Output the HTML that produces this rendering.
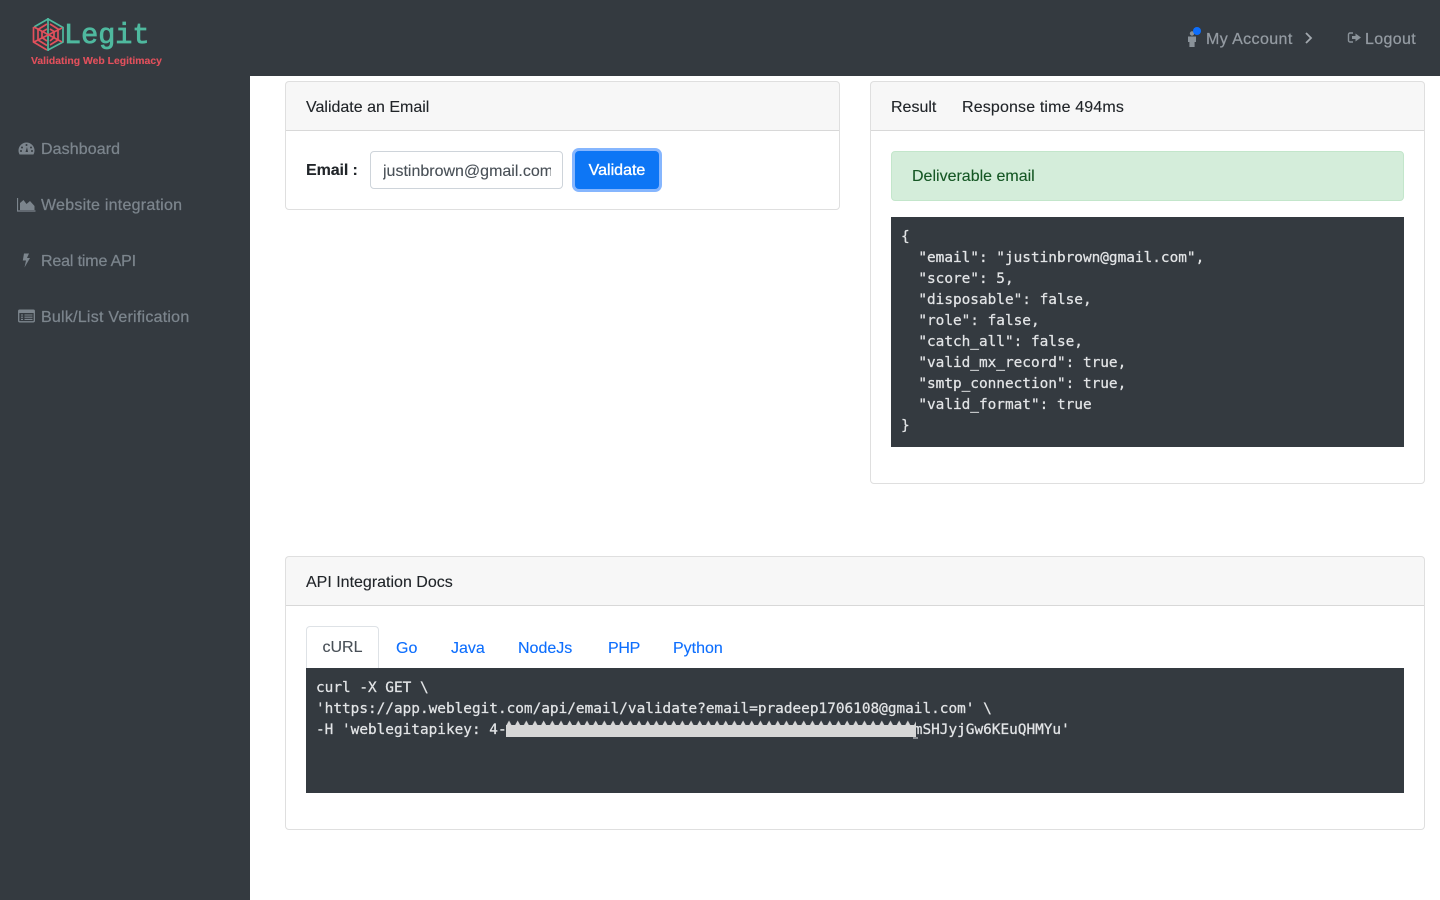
<!DOCTYPE html>
<html><head><meta charset="utf-8"><style>
*{box-sizing:border-box}
html,body{margin:0;padding:0;width:1440px;height:900px;overflow:hidden;background:#fff;font-family:"Liberation Sans",sans-serif;font-size:16px;color:#212529;-webkit-text-stroke:.12px}
.a{position:absolute;white-space:nowrap}
.side{left:0;top:0;width:250px;height:900px;background:#343a40}
.top{left:0;top:0;width:1440px;height:76px;background:#343a40}
.nav{color:#7c858d;line-height:24px;letter-spacing:.24px;-webkit-text-stroke:.25px}
.card{background:#fff;border:1px solid rgba(0,0,0,.125);border-radius:4px}
.hd{left:0;top:0;right:0;height:49px;position:absolute;background:rgba(0,0,0,.03);border-bottom:1px solid rgba(0,0,0,.125);border-radius:3px 3px 0 0}
pre.a{margin:0;font-family:"DejaVu Sans Mono","Liberation Mono",monospace;font-size:14.4px;line-height:21px;color:#e2e4e6;background:#343a40;white-space:pre;overflow:hidden;-webkit-text-stroke:.25px}
.tab{color:#0d6efd;line-height:24px}
</style></head><body>
<div class="a side"></div><div class="a top"></div>

<svg class="a" style="left:31px;top:17px" width="36" height="36" viewBox="0 0 36 36" fill="none" stroke-width="1.700">
<g stroke="#4fb99f"><path d="M3 10 17 2l15 8.500V25L17 33"/><path d="M17 1V34"/></g>
<g stroke="#e2505c"><path d="M2.500 10v15L16 33"/><path d="M16 7 7 12.500V23l9 5.500"/><path d="M16 12l-5 3v5.500l5 3.500"/><path d="M19 7l8 5v11l-8 5"/><path d="M19 12l4 2.500v6L19 24"/><path d="M3 10l28 15M3 25l28-14"/></g>
</svg>
<div class="a" style="left:64px;top:19px;font-family:'Liberation Mono',monospace;font-size:28.500px;line-height:34px;color:#4fb99f;-webkit-text-stroke:.8px #4fb99f">Legit</div>
<div class="a" style="left:31px;top:55px;font-size:10.400px;line-height:13px;font-weight:bold;color:#e2505c">Validating Web Legitimacy</div>

<svg class="a" style="left:1186px;top:26px" width="18" height="22" viewBox="0 0 18 22"><circle cx="6" cy="7.500" r="2.200" fill="#8a9299"/><path d="M2 10.500h8v5.500H8.600v5H3.400v-5H2z" fill="#8a9299"/><circle cx="11" cy="5" r="4" fill="#0d6efd"/></svg>
<div class="a nav" style="left:1206px;top:28px;color:#949ba2;letter-spacing:.4px">My Account</div>
<svg class="a" style="left:1303px;top:31px" width="12" height="14" viewBox="0 0 12 14" fill="none" stroke="#a3a9af" stroke-width="1.800"><path d="M3 2l5 5-5 5"/></svg>
<svg class="a" style="left:1347px;top:31px" width="16" height="14" viewBox="0 0 16 14"><path d="M6 2H3a1.500 1.500 0 0 0-1.500 1.500v6A1.500 1.500 0 0 0 3 11h3" fill="none" stroke="#8a9299" stroke-width="1.400"/><path d="M8.500 2.500 14 6.500l-5.500 4V8H5V5h3.500z" fill="#8a9299"/></svg>
<div class="a nav" style="left:1365px;top:28px;color:#949ba2;letter-spacing:.35px">Logout</div>

<svg class="a" style="left:18px;top:141px" width="17" height="15" viewBox="0 0 17 15"><path d="M8.500 1.500A8 8 0 0 0 .5 9.500c0 1.500.4 2.800 1.100 4h13.800c.7-1.200 1.100-2.500 1.100-4a8 8 0 0 0-8-8z" fill="#7c858d"/><circle cx="8.500" cy="4" r="1" fill="#343a40"/><circle cx="4" cy="6.500" r="1" fill="#343a40"/><circle cx="13" cy="6.500" r="1" fill="#343a40"/><circle cx="3" cy="10" r="1" fill="#343a40"/><circle cx="14" cy="10" r="1" fill="#343a40"/><path d="M7.500 11 9 6l1 5z" fill="#343a40"/></svg>
<div class="a nav" style="left:41px;top:138px;letter-spacing:.1px">Dashboard</div>
<svg class="a" style="left:17px;top:197px" width="19" height="15" viewBox="0 0 19 15"><path d="M.5 1v13H18.500" fill="none" stroke="#7c858d" stroke-width="1.200"/><path d="M3 13V6l3.500-3 3 4 3.500-3 4.500 5v4z" fill="#7c858d"/></svg>
<div class="a nav" style="left:41px;top:194px">Website integration</div>
<svg class="a" style="left:21px;top:253px" width="10" height="15" viewBox="0 0 10 15"><path d="M3 .5h5L6 5h3L3.500 14.500 5 7.500H1.800z" fill="#7c858d"/></svg>
<div class="a nav" style="left:41px;top:250px;letter-spacing:-.15px">Real time API</div>
<svg class="a" style="left:18px;top:309px" width="17" height="14" viewBox="0 0 17 14"><rect x=".7" y="1.200" width="15.600" height="11.600" rx="1" fill="none" stroke="#7c858d" stroke-width="1.300"/><rect x="1" y="1.500" width="15" height="2.500" fill="#7c858d"/><path d="M3 6h2M3 8.200h2M3 10.400h2M6.500 6h8M6.500 8.200h8M6.500 10.400h8" stroke="#7c858d" stroke-width="1.100"/></svg>
<div class="a nav" style="left:41px;top:306px">Bulk/List Verification</div>

<div class="a card" style="left:285px;top:81px;width:555px;height:129px">
<div class="hd"></div><div class="a" style="left:20px;top:14px;line-height:24px">Validate an Email</div></div>
<div class="a" style="left:306px;top:159px;line-height:24px;font-weight:bold;letter-spacing:-.1px">Email :</div>
<div class="a" style="left:370px;top:151px;width:193px;height:38px;border:1px solid #ced4da;border-radius:4px;background:#fff"><div style="position:absolute;left:12px;top:7px;width:168px;overflow:hidden;line-height:26px;color:#495057">justinbrown@gmail.com</div></div>
<div class="a" style="left:575px;top:151px;width:84px;height:38px;background:#0d76f5;border-radius:4px;box-shadow:0 0 0 3px rgba(13,110,253,.5);color:#fff;text-align:center;line-height:40px;-webkit-text-stroke:.35px">Validate</div>

<div class="a card" style="left:870px;top:81px;width:555px;height:403px">
<div class="hd"></div><div class="a" style="left:20px;top:14px;line-height:24px">Result</div><div class="a" style="left:91px;top:14px;line-height:24px;letter-spacing:.15px">Response time 494ms</div></div>
<div class="a" style="left:891px;top:151px;width:513px;height:50px;background:#d4edda;border:1px solid #c3e6cb;border-radius:4px;padding:13px 20px;line-height:24px;color:#155724">Deliverable email</div>
<pre class="a" style="left:891px;top:217px;width:513px;height:230px;padding:10px 10px">{
  "email": "justinbrown@gmail.com",
  "score": 5,
  "disposable": false,
  "role": false,
  "catch_all": false,
  "valid_mx_record": true,
  "smtp_connection": true,
  "valid_format": true
}</pre>

<div class="a card" style="left:285px;top:556px;width:1140px;height:274px">
<div class="hd"></div><div class="a" style="left:20px;top:14px;line-height:24px">API Integration Docs</div></div>
<div class="a" style="left:306px;top:626px;width:73px;height:42px;border:1px solid #dee2e6;border-bottom:0;border-radius:4px 4px 0 0;background:#fff;text-align:center;line-height:41px;color:#495057">cURL</div>
<div class="a tab" style="left:396px;top:637px">Go</div>
<div class="a tab" style="left:451px;top:637px">Java</div>
<div class="a tab" style="left:518px;top:637px">NodeJs</div>
<div class="a tab" style="left:608px;top:637px;letter-spacing:-.3px">PHP</div>
<div class="a tab" style="left:673px;top:637px">Python</div>
<pre class="a" style="left:306px;top:668px;width:1098px;height:125px;padding:10px 10px">curl -X GET \
'https://app.weblegit.com/api/email/validate?email=pradeep1706108@gmail.com' \
-H 'weblegitapikey: 4-                                               mSHJyjGw6KEuQHMYu'</pre>
<svg class="a" style="left:505px;top:720px" width="414" height="20" viewBox="0 0 414 20">
<defs><pattern id="sp" width="8.670" height="20" patternUnits="userSpaceOnUse"><path d="M1 6 4 0.500 7 6z" fill="#d6d6d6"/></pattern></defs>
<rect x="1" y="5" width="410" height="12" fill="#d6d6d6"/>
<rect x="1" y="0" width="410" height="7" fill="url(#sp)"/>
<path d="M408 18h5" stroke="#e2e4e6" stroke-width="1"/>
</svg>
</body></html>
